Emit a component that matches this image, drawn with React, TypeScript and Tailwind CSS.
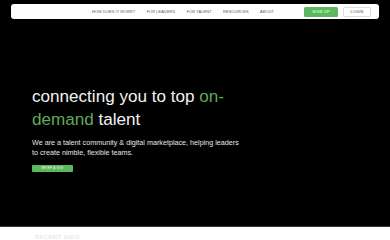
export default function App() {
  const links = ['HOW DOES IT WORK?', 'FOR LEADERS', 'FOR TALENT', 'RESOURCES', 'ABOUT'];

  return (
    <div className="min-h-screen bg-white font-['Liberation_Sans',Arial,sans-serif]">
      <div className="bg-black h-[227px] border-b border-[#3a3a3a]">
        <header className="pl-[11px] pt-[4px]">
          <nav className="w-[368px] h-[15px] bg-white rounded-[3px] flex items-center pr-[8px]">
            <ul className="flex items-center gap-[11.5px] ml-[81px] text-[3.9px] text-[#555] tracking-[0.1px]">
              {links.map((l) => (
                <li key={l} className="whitespace-nowrap">{l}</li>
              ))}
            </ul>
            <div className="ml-auto flex items-center gap-[5px]">
              <button className="w-[34px] h-[10px] rounded-[1.5px] bg-[#5cb85c] text-white text-[3.9px] tracking-[0.2px]">
                SIGN UP
              </button>
              <button className="w-[28px] h-[10px] rounded-[1.5px] border border-[#dcdcdc] bg-white text-[#444] text-[3.9px] tracking-[0.2px]">
                LOGIN
              </button>
            </div>
          </nav>
        </header>

        <section className="pl-[32px] pt-[66px]">
          <h1 className="max-w-[210px] text-[17.1px] leading-[23px] text-[#f2f2f2]">
            connecting you to top <span className="text-[#62a85a]">on-demand</span> talent
          </h1>
          <p className="mt-[7px] w-[210px] text-[7.2px] leading-[10px] text-[#e6e6e6]">
            We are a talent community &amp; digital marketplace, helping leaders to create nimble, flexible teams.
          </p>
          <button className="mt-[7px] w-[41px] h-[7px] rounded-[1px] bg-[#5cb85c] text-white text-[3px] tracking-[0.4px] flex items-center justify-center">
            BRIEF A GIG
          </button>
        </section>
      </div>

      <div className="pl-[35px] pt-[7px]">
        <div className="text-[6px] font-bold text-[#e8e8e8] tracking-[0.3px] leading-[6px]">RECENT GIGS</div>
        <div className="mt-[2px] w-[48px] h-[1px] bg-[#cfcfcf]" />
      </div>
    </div>
  );
}
